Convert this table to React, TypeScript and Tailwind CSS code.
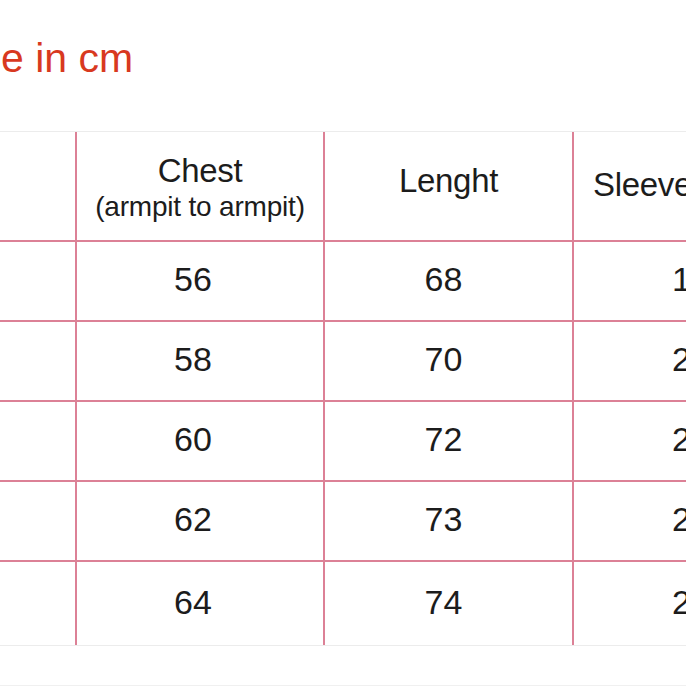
const rows = [
  { chest: '56', length: '68', sleeve: '19' },
  { chest: '58', length: '70', sleeve: '20' },
  { chest: '60', length: '72', sleeve: '21' },
  { chest: '62', length: '73', sleeve: '22' },
  { chest: '64', length: '74', sleeve: '23' },
];

export default function App() {
  return (
    <div className="h-[686px] w-[686px] overflow-hidden bg-white font-['Liberation_Sans',Arial,sans-serif] text-[#1c1c1c]">
      <h1 className="ml-[-56px] mt-[38px] whitespace-nowrap text-[41px] leading-[40px] text-[#d8391f]">
        Size in cm
      </h1>

      <div className="mt-[53px] w-[900px] border-t border-[#ececec]">
        {/* header */}
        <div className="flex h-[110px] border-b-2 border-[#dc8196]">
          <div className="w-[77px] border-r-2 border-[#dc8196]" />
          <div className="flex w-[248px] flex-col items-center justify-center border-r-2 border-[#dc8196] pt-[4px]">
            <span className="text-[33px] leading-[38px] tracking-[-0.3px]">Chest</span>
            <span className="text-[28px] leading-[34px] tracking-[-0.2px]">
              (armpit to armpit)
            </span>
          </div>
          <div className="flex w-[249px] items-center justify-center border-r-2 border-[#dc8196] pb-[11px]">
            <span className="text-[33px] leading-[38px] tracking-[-0.3px]">Lenght</span>
          </div>
          <div className="flex w-[236px] items-center justify-center border-r-2 border-[#dc8196] pb-[2px]">
            <span className="whitespace-nowrap text-[33px] leading-[38px] tracking-[-0.3px]">
              Sleeve length
            </span>
          </div>
        </div>

        {rows.map((row, i) => (
          <div
            key={i}
            className={
              i === rows.length - 1
                ? 'flex h-[84px] border-b border-[#ececec]'
                : 'flex h-[80px] border-b-2 border-[#dc8196]'
            }
          >
            <div className="w-[77px] border-r-2 border-[#dc8196]" />
            <div className="flex w-[248px] items-center justify-center border-r-2 border-[#dc8196] pb-[3px] pr-[14px] text-[34px]">
              {row.chest}
            </div>
            <div className="flex w-[249px] items-center justify-center border-r-2 border-[#dc8196] pb-[3px] pr-[10px] text-[34px]">
              {row.length}
            </div>
            <div className="flex w-[236px] items-center justify-center border-r-2 border-[#dc8196] pb-[3px] text-[34px]">
              {row.sleeve}
            </div>
          </div>
        ))}
      </div>

      <div className="mt-[39px] border-t border-[#f0f0f0]" />
    </div>
  );
}
